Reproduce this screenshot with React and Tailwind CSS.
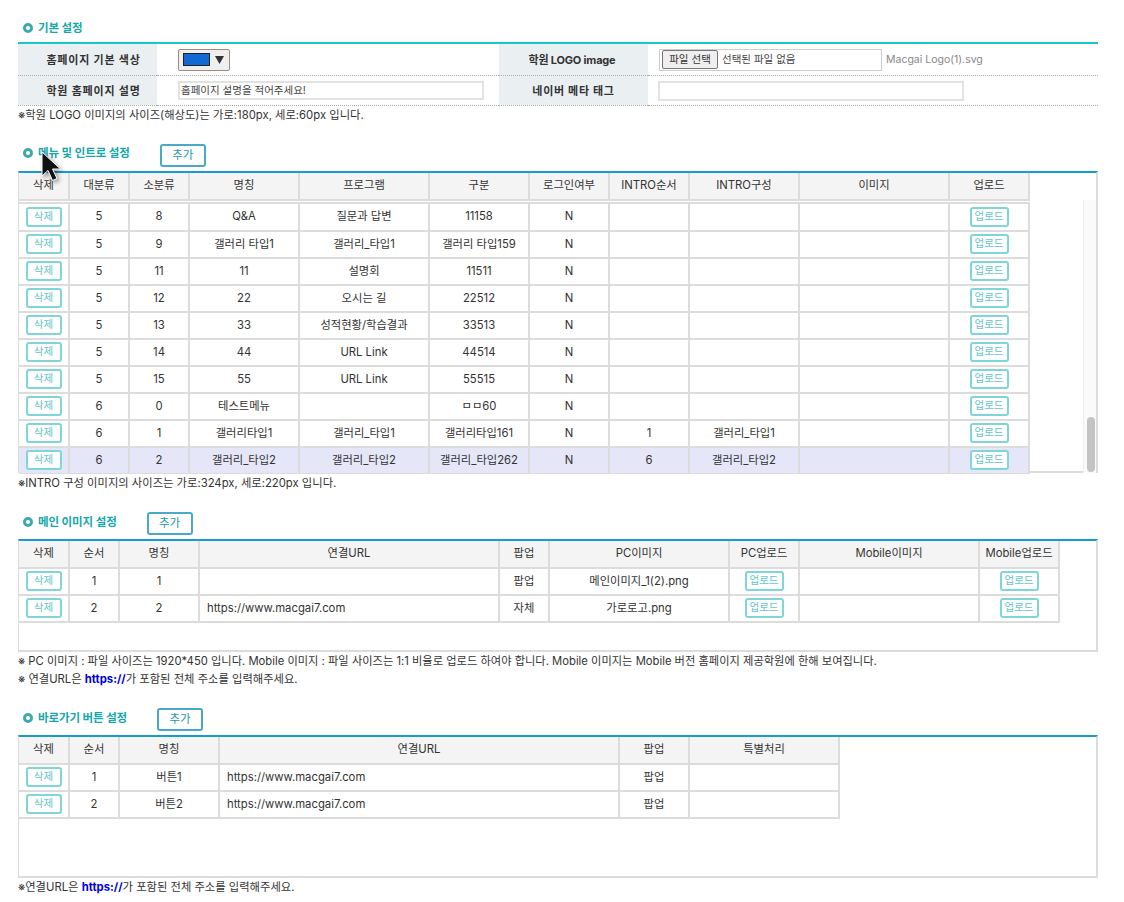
import React from "react";

const FONT = "font-['Inter','Noto_Sans_CJK_KR',sans-serif]";

const Title = ({ children, btn, btnClass = "", iconClass = "mb-[3px]", textClass = "mb-[1px]" }) => (
  <div className="flex h-[24px] items-center pl-[5px]">
    <span className={`h-[10px] w-[10px] rounded-full border-[3px] border-[#3fa9ad] bg-white ${iconClass}`} />
    <span className={`ml-[5px] text-[11.5px] font-bold tracking-[-0.1px] text-[#14a7ab] ${textClass}`}>{children}</span>
    {btn && (
      <button className={`h-[23px] w-[46px] rounded-[3px] border-2 border-[#4aa9c4] bg-white text-[11.5px] text-[#1f98a8] ${btnClass}`}>추가</button>
    )}
  </div>
);

const Btn = ({ w = "w-[36px]", children }) => (
  <button className={`inline-flex h-[20px] ${w} items-center justify-center rounded-[3px] border-2 border-[#7fd6d8] bg-white text-[10.5px] text-[#62c5c8]`}>{children}</button>
);

const Grid = ({ cols, head, rows, highlight, pad = [] }) => (
  <table className="table-fixed border-collapse text-[11.3px] text-[#333]" style={{ width: cols.reduce((a, b) => a + b, 0) }}>
    <colgroup>{cols.map((c, i) => <col key={i} style={{ width: c }} />)}</colgroup>
    {head && (
      <thead>
        <tr className="h-[27px] bg-[#f4f4f4]">
          {head.map((h, i) => (
            <th key={i} className="border-r-2 border-b-2 border-[#dcdcdc] p-0 text-center font-normal">{h}</th>
          ))}
        </tr>
      </thead>
    )}
    <tbody>
      {rows.map((r, ri) => (
        <tr key={ri} className={`h-[27px] ${highlight === ri ? "bg-[#e5e6f8]" : ""}`}>
          {r.map((c, i) => (
            <td key={i} className={`border-r-2 border-b-2 border-[#dcdcdc] p-0 ${pad.includes(i) ? "pl-[7px] text-left" : "text-center"}`}>
              {c === "삭제" ? <Btn>삭제</Btn> : c === "업로드" ? <Btn w="w-[39px]">업로드</Btn> : c}
            </td>
          ))}
        </tr>
      ))}
    </tbody>
  </table>
);

const menuCols = [50, 60, 60, 110, 130, 100, 80, 80, 110, 150, 80];
const menuHead = ["삭제", "대분류", "소분류", "명칭", "프로그램", "구분", "로그인여부", "INTRO순서", "INTRO구성", "이미지", "업로드"];
const menuRows = [
  ["5", "8", "Q&A", "질문과 답변", "11158", "N", "", ""],
  ["5", "9", "갤러리 타입1", "갤러리_타입1", "갤러리 타입159", "N", "", ""],
  ["5", "11", "11", "설명회", "11511", "N", "", ""],
  ["5", "12", "22", "오시는 길", "22512", "N", "", ""],
  ["5", "13", "33", "성적현황/학습결과", "33513", "N", "", ""],
  ["5", "14", "44", "URL Link", "44514", "N", "", ""],
  ["5", "15", "55", "URL Link", "55515", "N", "", ""],
  ["6", "0", "테스트메뉴", "", "ㅁㅁ60", "N", "", ""],
  ["6", "1", "갤러리타입1", "갤러리_타입1", "갤러리타입161", "N", "1", "갤러리_타입1"],
  ["6", "2", "갤러리_타입2", "갤러리_타입2", "갤러리_타입262", "N", "6", "갤러리_타입2"],
].map((r) => ["삭제", ...r, "", "업로드"]);

const Label = ({ children, className = "" }) => (
  <th className={`bg-[#eaf0f2] p-0 pt-[2px] text-center text-[11px] font-bold text-[#333] ${className}`}>{children}</th>
);

const boxed = "border-t-[2px] border-r-2 border-b-2 border-l border-t-[#179ccb] border-r-[#dcdcdc] border-b-[#dcdcdc] border-l-[#dcdcdc]";

export default function App() {
  return (
    <div className={`${FONT} relative h-[902px] w-[1124px] overflow-hidden bg-white pl-[18px] pr-[26px] pt-[17px] text-[#333]`}>
      <Title>기본 설정</Title>
      <table className="mt-[1px] w-[1080px] table-fixed border-collapse border-t-[2px] border-[#17c8c8] text-[12px]">
        <colgroup><col className="w-[139px]" /><col className="w-[342px]" /><col className="w-[149px]" /><col /></colgroup>
        <tbody>
          <tr className="h-[32px] border-b border-dotted border-[#aaa]">
            <Label className="pl-[12px] tracking-[0.8px]">홈페이지 기본 색상</Label>
            <td className="p-0 pl-[21px] pt-[1px]">
              <div className="flex h-[22px] w-[52px] items-center rounded-[2px] border border-[#9b8b7d] bg-[#efefef] pl-[4px]">
                <span className="h-[13px] w-[27px] border border-[#222] bg-[#1269d3]" />
                <span className="ml-[5px] text-[0px] leading-none">
                  <svg width="9" height="8" viewBox="0 0 9 8"><path d="M0 0h9L4.5 8z" fill="#333" /></svg>
                </span>
              </div>
            </td>
            <Label className="pr-[3px] tracking-[-0.2px]">학원 LOGO image</Label>
            <td className="p-0 pl-[11px] pt-[1px]">
              <div className="flex items-center">
                <div className="flex h-[22px] w-[223px] items-center border border-[#ccc] pl-[2px] text-[10.5px]">
                  <span className="flex h-[19px] w-[56px] shrink-0 items-center justify-center rounded-[2px] border border-[#767676] bg-[#efefef]">파일 선택</span>
                  <span className="ml-[4px] text-[#444]">선택된 파일 없음</span>
                </div>
                <span className="ml-[4px] text-[10.5px] text-[#888]">Macgai Logo(1).svg</span>
              </div>
            </td>
          </tr>
          <tr className="h-[30px] border-b border-dotted border-[#aaa]">
            <Label className="pl-[12px] tracking-[0.8px]">학원 홈페이지 설명</Label>
            <td className="p-0 pl-[21px] pt-[1px]">
              <div className="flex h-[19px] w-[306px] items-center border-2 border-[#e2e2e2] pl-[1px] text-[10.5px] text-[#444]">홈페이지 설명을 적어주세요!</div>
            </td>
            <Label className="tracking-[0.7px]">네이버 메타 태그</Label>
            <td className="p-0 pl-[10px] pt-[1px]">
              <div className="h-[20px] w-[306px] border-2 border-[#e2e2e2]" />
            </td>
          </tr>
        </tbody>
      </table>
      <p className="h-[17px] text-[11.3px] leading-[19px]">※학원 LOGO 이미지의 사이즈(해상도)는 가로:180px, 세로:60px 입니다.</p>

      <div className="mt-[21px]">
        <Title btn btnClass="ml-[30px]" iconClass="mb-[5px]" textClass="mb-[3px]">메뉴 및 인트로 설정</Title>
      </div>
      <div className={`relative mt-[3px] h-[302px] w-[1080px] ${boxed}`}>
        <Grid cols={menuCols} head={menuHead} rows={[]} />
        <div className="h-[273px] overflow-hidden">
          <div className="h-[3px] w-[1011px] border-b-2 border-[#dcdcdc]" />
          <Grid cols={menuCols} rows={menuRows} highlight={9} />
        </div>
        <div className="absolute right-0 top-[27px] h-[273px] w-[13px] border-l border-[#eee] bg-[#fafafa]">
          <div className="absolute bottom-[1px] left-[3px] h-[55px] w-[8px] rounded-full bg-[#c4c4c4]" />
        </div>
      </div>
      <p className="mt-[1px] h-[17px] text-[11.3px] leading-[19px]">※INTRO 구성 이미지의 사이즈는 가로:324px, 세로:220px 입니다.</p>

      <div className="mt-[21px]">
        <Title btn btnClass="ml-[30px]" iconClass="mb-[4px]" textClass="mb-[1px]">메인 이미지 설정</Title>
      </div>
      <div className={`mt-[3px] h-[113px] w-[1080px] ${boxed}`}>
        <Grid
          cols={[50, 50, 80, 300, 50, 180, 70, 180, 80]}
          pad={[3]}
          head={["삭제", "순서", "명칭", "연결URL", "팝업", "PC이미지", "PC업로드", "Mobile이미지", "Mobile업로드"]}
          rows={[
            ["삭제", "1", "1", "", "팝업", "메인이미지_1(2).png", "업로드", "", "업로드"],
            ["삭제", "2", "2", "https://www.macgai7.com", "자체", "가로로고.png", "업로드", "", "업로드"],
          ]}
        />
      </div>
      <p className="mt-[1px] h-[17px] text-[11.25px] leading-[16px]">※ PC 이미지 : 파일 사이즈는 1920*450 입니다. Mobile 이미지 : 파일 사이즈는 1:1 비율로 업로드 하여야 합니다. Mobile 이미지는 Mobile 버전 홈페이지 제공학원에 한해 보여집니다.</p>
      <p className="h-[18px] text-[11.3px] leading-[18px]">※ 연결URL은 <b className="text-[#0000e0]">https://</b>가 포함된 전체 주소를 입력해주세요.</p>

      <div className="mt-[20px]">
        <Title btn btnClass="ml-[30px]" iconClass="mb-[4px]" textClass="mb-[1px]">바로가기 버튼 설정</Title>
      </div>
      <div className={`mt-[3px] h-[143px] w-[1080px] ${boxed}`}>
        <Grid
          cols={[50, 50, 100, 400, 70, 150]}
          pad={[3]}
          head={["삭제", "순서", "명칭", "연결URL", "팝업", "특별처리"]}
          rows={[
            ["삭제", "1", "버튼1", "https://www.macgai7.com", "팝업", ""],
            ["삭제", "2", "버튼2", "https://www.macgai7.com", "팝업", ""],
          ]}
        />
      </div>
      <p className="h-[17px] text-[11.3px] leading-[19px]">※연결URL은 <b className="text-[#0000e0]">https://</b>가 포함된 전체 주소를 입력해주세요.</p>

      <svg className="absolute left-[39px] top-[151px] drop-shadow-[2px_2px_2px_rgba(0,0,0,0.4)]" width="24" height="34" viewBox="0 0 24 34">
        <path d="M3 1v24l6-5.5 4.5 10 4.5-2-4.5-9.5h8z" fill="#111" stroke="#fff" strokeWidth="1" />
      </svg>
    </div>
  );
}
